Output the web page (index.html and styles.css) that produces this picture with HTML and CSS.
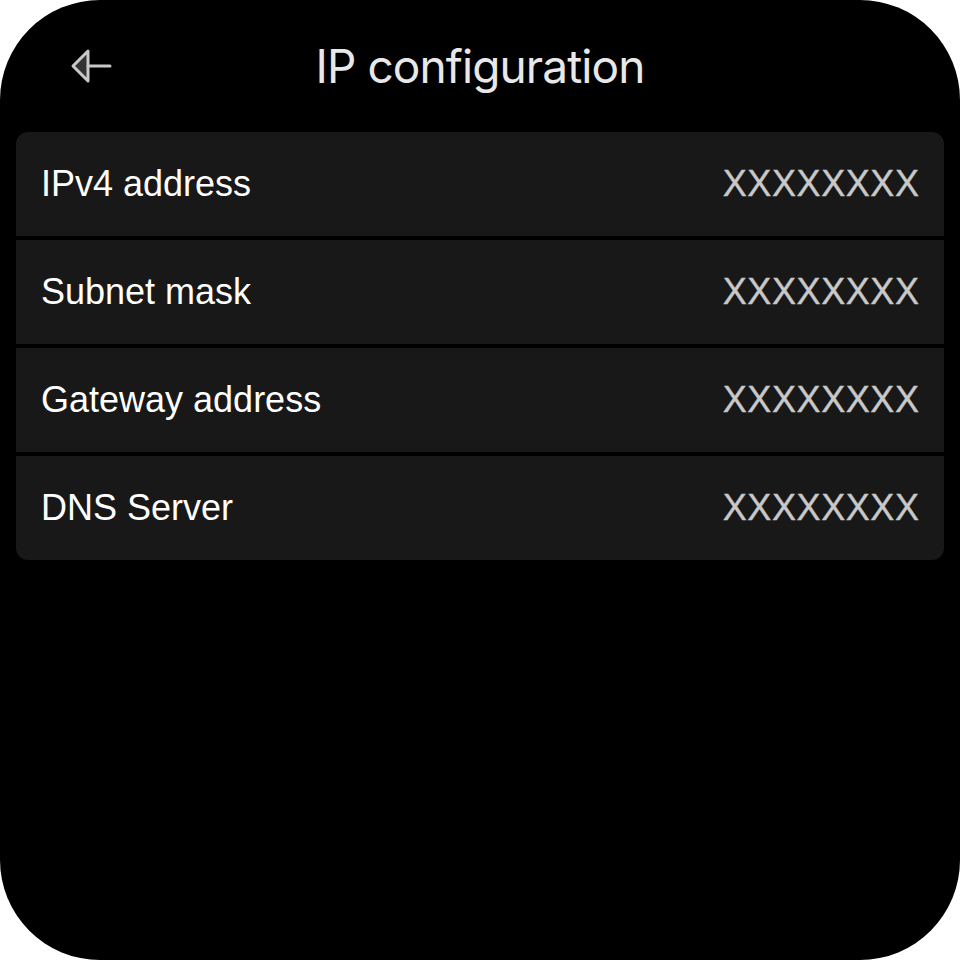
FILE: index.html
```html
<!DOCTYPE html>
<html>
<head>
<meta charset="utf-8">
<link rel="stylesheet" href="styles.css">
</head>
<body>
<div class="screen">
  <header class="topbar">
    <button class="back" aria-label="Back">
      <svg width="44" height="36" viewBox="0 0 44 36">
        <path d="M18 3 L3 18 L18 33 Z" fill="#333" stroke="#c8c8c8" stroke-width="3" stroke-linejoin="round"/>
        <path d="M18 18 H40" stroke="#c8c8c8" stroke-width="3" stroke-linecap="round"/>
      </svg>
    </button>
    <h1 class="title">IP configuration</h1>
  </header>
  <div class="list">
    <div class="row"><span class="label">IPv4 address</span><span class="value">XXXXXXXX</span></div>
    <div class="row"><span class="label">Subnet mask</span><span class="value">XXXXXXXX</span></div>
    <div class="row"><span class="label">Gateway address</span><span class="value">XXXXXXXX</span></div>
    <div class="row"><span class="label">DNS Server</span><span class="value">XXXXXXXX</span></div>
  </div>
</div>
</body>
</html>
```
FILE: styles.css
```css
html, body {
  margin: 0;
  padding: 0;
  background: #ffffff;
}
.screen {
  width: 960px;
  height: 960px;
  background: #000;
  border-radius: 100px;
  overflow: hidden;
  box-sizing: border-box;
  padding: 0 16px;
  font-family: "Liberation Sans", Arial, sans-serif;
}
.topbar {
  position: relative;
  height: 132px;
  display: flex;
  justify-content: center;
}
.back {
  position: absolute;
  left: 54px;
  top: 48px;
  padding: 0;
  border: 0;
  background: none;
  display: flex;
}
.title {
  margin: 43px 0 0 0;
  font-family: Inter, "Liberation Sans", sans-serif;
  font-weight: 400;
  font-size: 46px;
  letter-spacing: -0.9px;
  color: #e8e8e8;
  line-height: 1;
}
.list {
  display: flex;
  flex-direction: column;
  gap: 4px;
  border-radius: 12px;
  overflow: hidden;
}
.row {
  height: 104px;
  background: #181818;
  display: flex;
  align-items: center;
  justify-content: space-between;
  padding: 0 25px;
}
.label {
  font-size: 36px;
  color: #ffffff;
}
.value {
  font-size: 36px;
  letter-spacing: 0.6px;
  margin-right: -0.6px;
  color: #c8c8c8;
  -webkit-text-stroke: 0.4px #c8c8c8;
}
```
